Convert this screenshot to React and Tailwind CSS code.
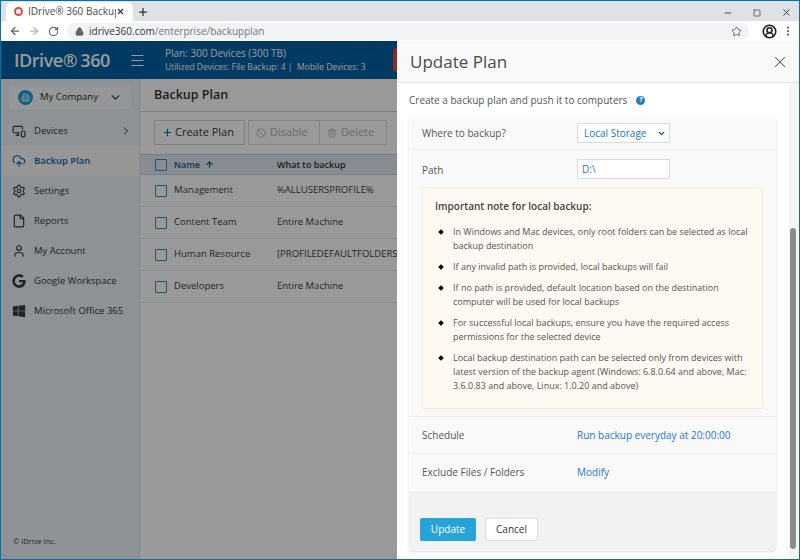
import { ArrowLeft, ArrowRight, RotateCw, Lock, Star, MoreVertical, X, Plus, Minus, Menu, ChevronDown, ChevronRight, MonitorSmartphone, CloudUpload, Settings, File, User, Ban, Trash2, ArrowUp, Building2, CircleUserRound, Square } from "lucide-react";
import { FaGoogle, FaWindows } from "react-icons/fa";

const navItems = [
  { label: "Devices", Icon: MonitorSmartphone, arrow: true },
  { label: "Backup Plan", Icon: CloudUpload, active: true },
  { label: "Settings", Icon: Settings },
  { label: "Reports", Icon: File },
  { label: "My Account", Icon: User },
  { label: "Google Workspace", Icon: FaGoogle },
  { label: "Microsoft Office 365", Icon: FaWindows },
];

const plans = [
  ["Management", "%ALLUSERSPROFILE%"],
  ["Content Team", "Entire Machine"],
  ["Human Resource", "[PROFILEDEFAULTFOLDERS]"],
  ["Developers", "Entire Machine"],
];

const notes = [
  "In Windows and Mac devices, only root folders can be selected as local backup destination",
  "If any invalid path is provided, local backups will fail",
  "If no path is provided, default location based on the destination computer will be used for local backups",
  "For successful local backups, ensure you have the required access permissions for the selected device",
  "Local backup destination path can be selected only from devices with latest version of the backup agent (Windows: 6.8.0.64 and above, Mac: 3.6.0.83 and above, Linux: 1.0.20 and above)",
];

function BrowserChrome() {
  return (
    <div className="shrink-0">
      <div className="flex h-[20px] items-end bg-[#dee1e6]">
        <div className="ml-[5px] flex h-[19px] w-[127px] items-center rounded-t-md bg-white px-[8px]">
          <span className="h-[9px] w-[9px] rounded-full border-2 border-[#e8434b]" />
          <span className="ml-[5px] w-[88px] overflow-hidden whitespace-nowrap text-[10px] text-[#4a4a4a]">IDrive® 360 Backup Console</span>
          <X size={9} strokeWidth={3} className="ml-auto text-[#333]" />
        </div>
        <Plus size={12} strokeWidth={2.5} className="mb-[3px] ml-[4px] text-[#333]" />
        <div className="ml-auto mb-[3px] flex items-center gap-[20px] pr-[7px] text-[#333]">
          <Minus size={10} />
          <Square size={8} />
          <X size={11} />
        </div>
      </div>
      <div className="flex h-[20px] items-center bg-white pl-[8px] pr-[5px] text-[#5f6368]">
        <ArrowLeft size={12} strokeWidth={2.5} />
        <ArrowRight size={12} strokeWidth={2.5} className="ml-[7px] text-[#b5b7ba]" />
        <RotateCw size={11} strokeWidth={2.5} className="ml-[8px]" />
        <div className="ml-[8px] flex h-[17px] flex-1 items-center rounded-full bg-[#f1f3f4] px-[8px]">
          <Lock size={9} fill="currentColor" />
          <span className="ml-[5px] text-[10px] text-[#333]">idrive360.com<span className="text-[#70757a]">/enterprise/backupplan</span></span>
          <Star size={11} className="ml-auto mr-[-1px]" />
        </div>
        <CircleUserRound size={15} strokeWidth={2.5} className="ml-[13px] text-[#222]" />
        <MoreVertical size={12} strokeWidth={2.5} className="ml-[5px]" />
      </div>
    </div>
  );
}

function Sidebar() {
  return (
    <aside className="flex w-[139px] shrink-0 flex-col border-r border-[#dde4ea] bg-[#ecf3f8] pt-[7px]">
      <div className="mx-[8px] flex h-[23px] items-center rounded-sm bg-[#f7fafc] px-[9px]">
        <span className="flex h-[15px] w-[15px] items-center justify-center rounded-full bg-[#18a0d8] text-white"><Building2 size={9} /></span>
        <span className="ml-[7px] text-[9.5px] text-[#333]">My Company</span>
        <ChevronDown size={13} strokeWidth={2.5} className="ml-auto text-[#00507f]" />
      </div>
      <nav className="mt-[7px]">
        {navItems.map(({ label, Icon, arrow, active }) => (
          <div key={label} className={`flex h-[30px] items-center pl-[11px] pr-[7px] ${active ? "bg-[#fafbfc] font-semibold text-[#0a66a8]" : "text-[#3a3a3a]"}`}>
            <span className="flex w-[14px] justify-center"><Icon size={14} /></span>
            <span className="ml-[8px] text-[9.5px]">{label}</span>
            {arrow && <ChevronRight size={12} className="ml-auto" />}
          </div>
        ))}
      </nav>
      <p className="mt-auto mb-[12px] ml-[12px] text-[7.5px] text-[#444]">© IDrive Inc.</p>
    </aside>
  );
}

function PlanList() {
  return (
    <main className="flex-1 overflow-hidden bg-white">
      <div className="flex h-[33px] items-center border-b border-[#c5d7e5] pl-[14px] text-[12.5px] font-semibold text-[#333]">Backup Plan</div>
      <div className="flex h-[25px] items-center mt-[8px] ml-[14px] text-[11px] text-[#3a3a3a]">
        <button className="flex h-full w-[91px] items-center border border-[#cfd8df] pl-[7px]"><Plus size={11} strokeWidth={2.5} className="text-[#0a66a8]" /><span className="ml-[2px]">Create Plan</span></button>
        <div className="ml-[3px] flex h-full border border-[#d6dce1] text-[#aeb4b8]">
          <button className="flex w-[71px] items-center border-r border-[#d6dce1] pl-[7px]"><Ban size={10} /><span className="ml-[4px]">Disable</span></button>
          <button className="flex w-[66px] items-center pl-[7px]"><Trash2 size={10} /><span className="ml-[4px]">Delete</span></button>
        </div>
      </div>
      <div className="mt-[9px] flex h-[21px] items-center border-y border-[#c3d3df] bg-[#dfeaf2] pl-[15px] text-[9px] font-semibold">
        <span className="h-[12px] w-[12px] rounded-[1px] border border-[#2b8fc7]" />
        <span className="ml-[7px] flex w-[103px] items-center text-[#1f5a8a]">Name <ArrowUp size={9} strokeWidth={3} className="ml-[5px]" /></span>
        <span className="text-[#333]">What to backup</span>
      </div>
      {plans.map(([name, what]) => (
        <div key={name} className="flex h-[32px] items-center whitespace-nowrap border-b border-[#e4e8eb] pl-[15px] text-[9.5px] text-[#3f3f3f]">
          <span className="h-[12px] w-[12px] shrink-0 rounded-[1px] border border-[#2b8fc7]" />
          <span className="ml-[7px] w-[103px] shrink-0">{name}</span>
          <span>{what}</span>
        </div>
      ))}
    </main>
  );
}

function UpdatePlanDrawer() {
  return (
    <section className="absolute inset-y-0 right-0 flex w-[402px] flex-col bg-white">
      <header className="flex h-[42px] shrink-0 items-center justify-between border-b border-[#e6e6e6] bg-[#f9f9f9] pl-[13px] pr-[10px]">
        <h2 className="text-[17px] text-[#4a4a4a]">Update Plan</h2>
        <X size={18} strokeWidth={1.4} className="text-[#555]" />
      </header>
      <div className="flex min-h-0 flex-1">
        <div className="flex min-w-0 flex-1 flex-col pl-[12px] pr-[13px]">
          <div className="flex h-[34px] shrink-0 items-center text-[10px] text-[#555]">
            Create a backup plan and push it to computers
            <span className="ml-[9px] flex h-[9px] w-[9px] items-center justify-center rounded-full bg-[#1f7fc0] text-[7px] font-bold text-white">?</span>
          </div>
          <div className="mb-[8px] flex flex-1 flex-col rounded-b-sm bg-[#f2f2f2] shadow-sm">
            <div className="flex h-[33px] shrink-0 items-center border-b border-[#ececec] bg-[#f9f9f9] pl-[13px] text-[10px] text-[#555]">
              <span className="w-[155px]">Where to backup?</span>
              <div className="flex h-[20px] w-[93px] items-center border border-[#dcdcdc] bg-white pl-[6px] pr-[3px] text-[#1976d2]">
                Local Storage
                <ChevronDown size={9} strokeWidth={3.5} className="ml-auto text-[#0a50a0]" />
              </div>
            </div>
            <div className="shrink-0 border-b border-[#ececec] bg-[#f9f9f9] px-[13px] pb-[7px] pt-[9px] text-[10px] text-[#555]">
              <div className="flex items-center">
                <span className="mt-[3px] w-[155px]">Path</span>
                <div className="flex h-[20px] w-[93px] items-center border border-[#dcdcdc] bg-white pl-[4px] text-[#1976d2]">D:\</div>
              </div>
              <div className="mt-[8px] h-[222px] rounded-[2px] border border-[#f5ecd9] bg-[#fef9f3] pl-[12px] pr-[14px] pt-[11px]">
                <p className="text-[10px] font-semibold text-[#444]">Important note for local backup:</p>
                <ul className="mt-[11px] space-y-[7px] text-[9px] leading-[14px] text-[#555]">
                  {notes.map((note) => (
                    <li key={note} className="relative pl-[18px]">
                      <span className="absolute left-[4px] top-[5px] h-[4px] w-[4px] rotate-45 bg-black" />
                      {note}
                    </li>
                  ))}
                </ul>
              </div>
            </div>
            <div className="flex h-[37px] shrink-0 items-center border-b border-[#ececec] bg-[#f9f9f9] pl-[13px] text-[10px] text-[#555]">
              <span className="w-[155px]">Schedule</span>
              <span className="text-[#1976d2]">Run backup everyday at 20:00:00</span>
            </div>
            <div className="flex h-[37px] shrink-0 items-center bg-[#f9f9f9] pl-[13px] text-[10px] text-[#555]">
              <span className="w-[155px]">Exclude Files / Folders</span>
              <span className="text-[#1976d2]">Modify</span>
            </div>
            <div className="mt-auto mb-[10px] flex gap-[9px] pl-[11px] text-[10px]">
              <button className="h-[23px] w-[56px] rounded-[2px] bg-[#26a4d8] text-white">Update</button>
              <button className="h-[23px] w-[53px] rounded-[2px] border border-[#dcdcdc] bg-white text-[#333]">Cancel</button>
            </div>
          </div>
        </div>
        <div className="relative w-[9px] shrink-0 mr-[1px] mb-[1px] bg-[#f5f5f5]">
          <span className="absolute left-[1px] top-[145px] bottom-[9px] w-[6px] rounded-full bg-[#8c8c8c]" />
        </div>
      </div>
    </section>
  );
}

export default function App() {
  return (
    <div className="flex h-[560px] w-[800px] flex-col overflow-hidden border border-[#0b6ea6] font-['Open_Sans',sans-serif]">
      <BrowserChrome />
      <div className="relative flex min-h-0 flex-1 flex-col">
        <div className="flex h-[38px] shrink-0 items-center bg-[#0061a3] text-white">
          <div className="ml-[13px] flex w-[115px] items-center text-[18px] font-semibold tracking-tight">IDrive®<span className="ml-[3px]">360</span></div>
          <Menu size={17} strokeWidth={1.5} />
          <div className="ml-[19px] leading-none">
            <p className="text-[10px]">Plan: 300 Devices (300 TB)</p>
            <p className="mt-[5px] text-[8.5px]">Utilized Devices: File Backup: 4 |&nbsp;&nbsp;Mobile Devices: 3</p>
          </div>
          <div className="ml-[27px] h-[24px] w-[30px] rounded-sm bg-[#e74c3c]" />
        </div>
        <div className="flex min-h-0 flex-1">
          <Sidebar />
          <PlanList />
        </div>
        <div className="absolute inset-0 bg-black/40" />
        <UpdatePlanDrawer />
      </div>
    </div>
  );
}
